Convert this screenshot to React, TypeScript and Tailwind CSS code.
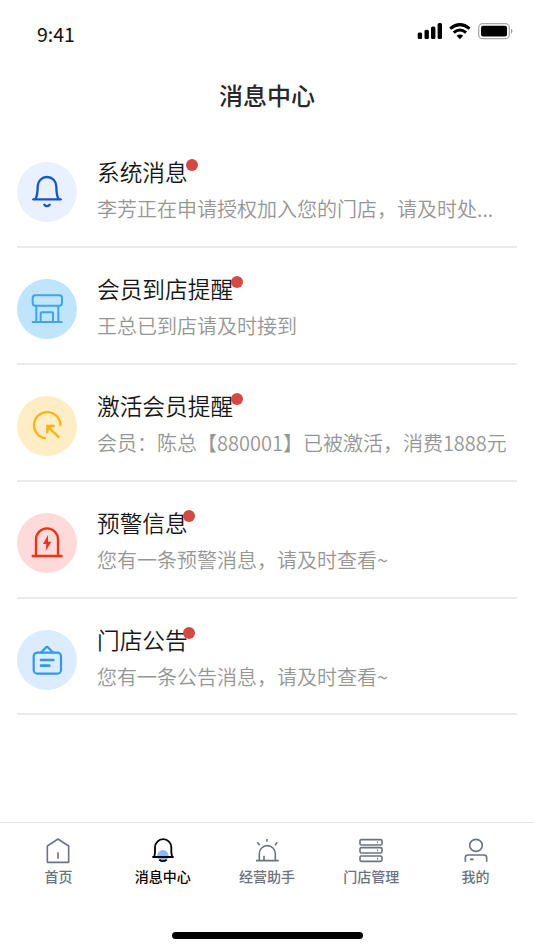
import type { ReactNode } from "react";

type Message = {
  title: string;
  text: string;
  disc: string;
  dot: string;
  icon: ReactNode;
};

const messages: Message[] = [
  {
    title: "系统消息",
    text: "李芳正在申请授权加入您的门店，请及时处...",
    disc: "bg-[#ebf0fe]",
    dot: "-right-[10px]",
    icon: (
      <g stroke="#0f55d0" strokeWidth="7">
        <path d="M49 112H131" />
        <path d="M56 110Q62 98 62 73A28 28 0 0 1 118 73Q118 98 124 110" />
        <path d="M82 128Q90 137 98 128" />
      </g>
    ),
  },
  {
    title: "会员到店提醒",
    text: "王总已到店请及时接到",
    disc: "bg-[#bfe5fd]",
    dot: "-right-[10px]",
    icon: (
      <g stroke="#3da5ea" strokeWidth="6">
        <rect x="47" y="49" width="88" height="31" rx="8" />
        <path d="M58 81V128M124 81V128M47 129H134M71 128V103Q71 100 74 100H105Q108 100 108 103V128" />
      </g>
    ),
  },
  {
    title: "激活会员提醒",
    text: "会员：陈总【880001】已被激活，消费1888元",
    disc: "bg-[#feedc5]",
    dot: "-right-[10px]",
    icon: (
      <g stroke="#fbb415" strokeWidth="7">
        <path d="M130 89A39.5 39.5 0 1 0 87 127" strokeLinecap="butt" />
        <path d="M91 91L127 125M113 90H91V112" strokeLinecap="butt" />
        <path d="M91 91H106L91 106Z" fill="#fbb415" strokeWidth="2" />
      </g>
    ),
  },
  {
    title: "预警信息",
    text: "您有一条预警消息，请及时查看~",
    disc: "bg-[#fedada]",
    dot: "-right-[7px]",
    icon: (
      <g stroke="#ee3214" strokeWidth="7">
        <path d="M57 128V79A33 33 0 0 1 123 79V128M47 129H134" />
        <path d="M93 66L78 93H88L86 114L103 86H93Z" fill="#ee3214" stroke="none" />
      </g>
    ),
  },
  {
    title: "门店公告",
    text: "您有一条公告消息，请及时查看~",
    disc: "bg-[#dbecfe]",
    dot: "-right-[7px]",
    icon: (
      <g stroke="#3298ec" strokeWidth="6.5">
        <rect x="50" y="68" width="82" height="63" rx="11" />
        <path d="M73 67L86 53Q90 49 94 53L107 67" />
        <path d="M72 90H109M72 107H97" strokeWidth="8" />
      </g>
    ),
  },
];

const tabs: { label: string; active?: boolean; icon: ReactNode }[] = [
  {
    label: "首页",
    icon: <path d="M13 33L45 12L77 33V82H13ZM45 52V71" />,
  },
  {
    label: "消息中心",
    active: true,
    icon: (
      <>
        <circle cx="45" cy="62" r="17" fill="#8fb7f5" stroke="none" />
        <path
          d="M13 66H77M19 65L21 52V37A24.5 24.5 0 0 1 70 37V52L72 65M34 74Q45 83 56 74"
          strokeWidth="5.5"
        />
      </>
    ),
  },
  {
    label: "经营助手",
    icon: (
      <path d="M12 77H80M22 76V56A24 24 0 0 1 70 56V76M36 76V62M45 12V20M16 22L23 31M76 22L69 31" />
    ),
  },
  {
    label: "门店管理",
    icon: (
      <>
        <rect x="12" y="14" width="66" height="16" rx="4" />
        <rect x="12" y="38" width="66" height="16" rx="4" />
        <rect x="12" y="63" width="66" height="16" rx="4" />
        <path d="M63 22H66M63 46H66M63 71H66" />
      </>
    ),
  },
  {
    label: "我的",
    icon: (
      <>
        <ellipse cx="45" cy="31" rx="19" ry="18" />
        <path d="M13 80V68Q13 60 21 60H69Q77 60 77 68V80M27 73H38" />
      </>
    ),
  },
];

function StatusBar() {
  return (
    <div className="flex h-[66px] justify-between pl-[37px] pr-[20px]">
      <span className="pt-[19px] text-[19.5px] leading-[30px] text-[#111]">9:41</span>
      <svg className="mt-[20px]" width="97" height="22" viewBox="0 0 97 22">
        <rect x="0.7" y="12.5" width="4.4" height="6.5" rx="1.5" />
        <rect x="7.5" y="9.7" width="4.4" height="9.3" rx="1.5" />
        <rect x="14" y="6.5" width="4.4" height="12.5" rx="1.5" />
        <rect x="20.6" y="3" width="4.4" height="16" rx="1.5" />
        <g fill="none" stroke="#000" strokeWidth="3">
          <path d="M33.2 8.7Q42.9 0.6 52.6 8.7" />
          <path d="M36.7 12.6Q42.9 7.3 49.1 12.6" />
        </g>
        <path d="M39.6 15.8Q42.9 13 46.2 15.8L42.9 19.2Z" />
        <rect x="61.7" y="3.7" width="30.6" height="15" rx="4" fill="none" stroke="#aaa" strokeWidth="1.3" />
        <rect x="64" y="5.8" width="26" height="10.6" rx="2" />
        <path d="M94 8.5Q97 11 94 13.8Z" fill="#999" />
      </svg>
    </div>
  );
}

function MessageRow({ title, text, disc, dot, icon }: Message) {
  return (
    <li className="flex h-[116.9px] border-b-2 border-[#ebebeb]">
      <div className={`mt-[31px] size-[60px] shrink-0 rounded-full ${disc}`}>
        <svg viewBox="0 0 180 180" fill="none" strokeLinecap="round" strokeLinejoin="round">
          {icon}
        </svg>
      </div>
      <div className="ml-[20px] pt-[24px]">
        <h2 className="relative w-fit text-[22.7px] leading-[34px] font-[350] text-[#161616]">
          {title}
          <span className={`absolute top-[4px] size-[12px] rounded-full bg-[#d24a43] ${dot}`} />
        </h2>
        <p className="mt-[5px] whitespace-nowrap text-[20px] leading-[30px] font-[350] text-[#969696]">{text}</p>
      </div>
    </li>
  );
}

export default function App() {
  return (
    <div className="flex h-[950px] w-[534px] flex-col overflow-hidden bg-white font-['Noto_Sans_CJK_SC',sans-serif]">
      <StatusBar />
      <h1 className="h-[65px] pt-[11px] text-center text-[24px] leading-[36px] font-medium text-[#282828]">消息中心</h1>
      <ul className="mx-[17px]">
        {messages.map((m) => (
          <MessageRow key={m.title} {...m} />
        ))}
      </ul>
      <nav className="mt-auto flex h-[128px] flex-col items-center border-t border-[#e6e6e6]">
        <div className="flex w-[521.5px] pt-[11.5px]">
          {tabs.map((t) => (
            <div
              key={t.label}
              className={`flex flex-1 flex-col items-center ${t.active ? "text-black" : "text-[#6b7280]"}`}
            >
              <svg
                className="size-[30px]"
                viewBox="0 0 90 90"
                fill="none"
                stroke="currentColor"
                strokeWidth="4.8"
                strokeLinejoin="round"
              >
                {t.icon}
              </svg>
              <span className="text-[14px] leading-[22px] font-medium">{t.label}</span>
            </div>
          ))}
        </div>
        <div className="mt-auto mb-[11px] h-[7.5px] w-[191px] rounded-full bg-black" />
      </nav>
    </div>
  );
}
